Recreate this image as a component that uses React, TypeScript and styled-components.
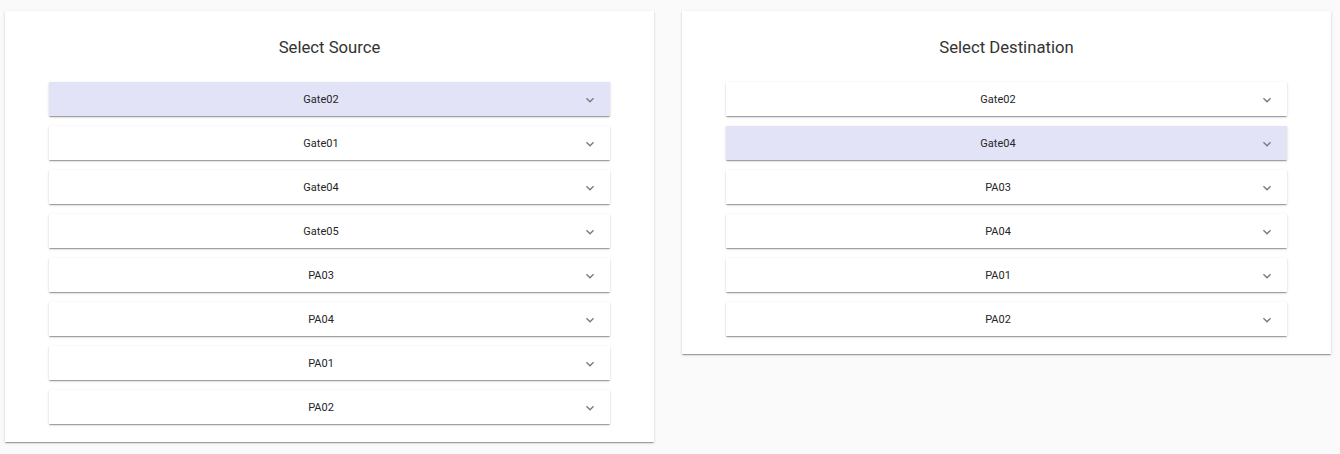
import * as React from 'react';
import styled, { createGlobalStyle } from 'styled-components';

const GlobalStyle = createGlobalStyle`
    body {
        margin: 0;
        background: #fafafa;
        font-family: Roboto, "Liberation Sans", sans-serif;
    }
`;

const Page = styled.main`
    display: grid;
    grid-template-columns: 649px 649px;
    column-gap: 28px;
    align-items: start;
    padding: 11px 9px 12px 5px;
`;

const Card = styled.section`
    background: #fff;
    padding: 25px 44px 18px;
    box-shadow: 0px 2px 1px -1px rgba(0, 0, 0, 0.2),
        0px 1px 1px 0px rgba(0, 0, 0, 0.14), 0px 1px 3px 0px rgba(0, 0, 0, 0.12);
`;

const Title = styled.h2`
    margin: 0 0 22px;
    font-size: 16.7px;
    line-height: 24px;
    font-weight: 400;
    color: #333;
    text-align: center;
`;

const List = styled.div`
    display: flex;
    flex-direction: column;
    gap: 10px;
`;

const Item = styled.div<{ $selected?: boolean }>`
    display: flex;
    align-items: center;
    height: 34px;
    padding: 0 12px 0 16px;
    background: ${(p) => (p.$selected ? '#e3e3f8' : '#fff')};
    box-shadow: 0px 2px 1px -1px rgba(0, 0, 0, 0.2),
        0px 1px 1px 0px rgba(0, 0, 0, 0.14), 0px 1px 3px 0px rgba(0, 0, 0, 0.12);
`;

const Label = styled.span`
    flex: 1;
    text-align: center;
    font-size: 11px;
    color: #262626;
`;

const Chevron = styled.svg`
    flex: none;
    margin: 1px 0 0 5px;
    width: 16px;
    height: 16px;
    fill: #7a7a7a;
`;

function Selector({ title, items, selected }: { title: string; items: string[]; selected: string }) {
    return (
        <Card>
            <Title>{title}</Title>
            <List>
                {items.map((name) => (
                    <Item key={name} $selected={name === selected}>
                        <Label>{name}</Label>
                        <Chevron viewBox="0 0 24 24">
                            <path d="M16.59 8.59 12 13.17 7.41 8.59 6 10l6 6 6-6z" />
                        </Chevron>
                    </Item>
                ))}
            </List>
        </Card>
    );
}

export default function App(): JSX.Element {
    return (
        <>
            <GlobalStyle />
            <Page>
                <Selector
                    title="Select Source"
                    items={['Gate02', 'Gate01', 'Gate04', 'Gate05', 'PA03', 'PA04', 'PA01', 'PA02']}
                    selected="Gate02"
                />
                <Selector
                    title="Select Destination"
                    items={['Gate02', 'Gate04', 'PA03', 'PA04', 'PA01', 'PA02']}
                    selected="Gate04"
                />
            </Page>
        </>
    );
}
